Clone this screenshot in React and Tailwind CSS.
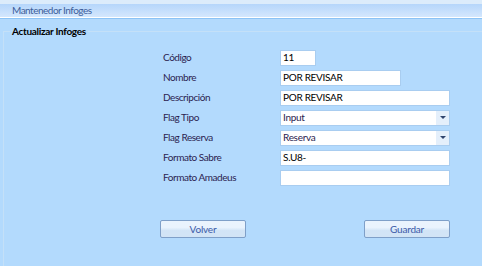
import React from "react";

const font = { fontFamily: 'Lato, "Liberation Sans", sans-serif' };

function Field({ label, children }) {
	return (
		<div className="flex items-center h-[19px]">
			<div className="w-[117px] text-[10px] tracking-[-0.45px] text-[#2b2350]">{label}</div>
			{children}
		</div>
	);
}

function TextBox({ value, width }) {
	return (
		<div
			className="h-[16px] bg-white border border-[#a9cdf0] px-[2px] flex items-center text-[10px] tracking-[-0.3px] text-black"
			style={{ width }}
		>
			{value}
		</div>
	);
}

function Select({ value }) {
	return (
		<div className="h-[16px] w-[170px] bg-white border border-[#a9cdf0] flex items-center text-[10px] tracking-[-0.3px] text-[#2b2350]">
			<span className="flex-1 px-[2px]">{value}</span>
			<div className="w-[13px] h-full bg-[#e4effb] flex items-center justify-center">
				<div className="w-0 h-0 border-l-[3px] border-r-[3px] border-t-[3px] border-l-transparent border-r-transparent border-t-[#30456e]" />
			</div>
		</div>
	);
}

function Btn({ children }) {
	return (
		<button className="w-[86px] h-[18px] rounded-[2px] border border-[#7f9fc8] bg-gradient-to-b from-[#eaf3fd] from-40% to-[#d2e4f6] to-60% text-[10px] tracking-[-0.2px] text-[#3c5aa8]">
			{children}
		</button>
	);
}

export default function App() {
	return (
		<div className="w-[482px] h-[266px] bg-[#b3dafd] overflow-hidden" style={font}>
			<div className="h-[4px] bg-[#dcecfb]" />
			<div className="h-[13px] bg-gradient-to-b from-[#b5d6fb] to-[#d4e7fd] pl-[12px] text-[10px] tracking-[-0.5px] leading-[13px] text-[#3d5e9a]">
				Mantenedor Infoges
			</div>
			<div className="h-px bg-white" />
			<div className="h-px bg-[#8cc3f5]" />
			<div className="relative mt-[12px] ml-[3px] h-[300px] border-l border-t border-[#c4e0f8]">
				<div className="absolute -top-[8px] left-[6px] px-[2px] bg-[#b3dafd] text-[10px] tracking-[-0.3px] font-bold text-black leading-[14px]">
					Actualizar Infoges
				</div>
				<div className="pl-[159px] pt-[16px] flex flex-col gap-[1px]">
					<Field label="Código"><TextBox value="11" width={36} /></Field>
					<Field label="Nombre"><TextBox value="POR REVISAR" width={121} /></Field>
					<Field label="Descripción"><TextBox value="POR REVISAR" width={170} /></Field>
					<Field label="Flag Tipo"><Select value="Input" /></Field>
					<Field label="Flag Reserva"><Select value="Reserva" /></Field>
					<Field label="Formato Sabre"><TextBox value="S.U8-" width={170} /></Field>
					<Field label="Formato Amadeus"><TextBox value="" width={170} /></Field>
				</div>
				<div className="flex pl-[156px] pt-[33px] gap-[118px]">
					<Btn>Volver</Btn>
					<Btn>Guardar</Btn>
				</div>
			</div>
		</div>
	);
}
